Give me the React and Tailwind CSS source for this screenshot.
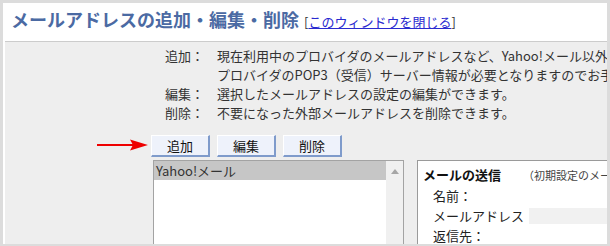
export default function App() {
  return (
    <div className="relative w-[610px] h-[246px] overflow-hidden bg-[#dcdcdc] pt-[3px] px-[3px] pb-[2px] font-['Noto_Sans_CJK_JP','Noto_Sans',sans-serif]">
      <div className="bg-white h-full flex flex-col overflow-hidden">
        <div className="h-[38px] shrink-0 flex items-baseline pl-[8px] pt-[4px] whitespace-nowrap">
          <span className="text-[18px] leading-[24px] font-bold text-[#4b6aa3]">メールアドレスの追加・編集・削除</span>
          <span className="ml-[5px] text-[13px] text-[#333]">
            [<span className="text-[#2a2ad0] underline">このウィンドウを閉じる</span>]
          </span>
        </div>
        <div className="h-px shrink-0 ml-[2px] bg-[#cccccc]" />
        <div className="ml-[2px] flex-1 bg-[#eeeeee] pt-[4px] text-[13px] leading-[19px] text-[#333] overflow-hidden">
          <div className="ml-[160px] grid grid-cols-[52px_1fr] whitespace-nowrap">
            <div>追加：</div>
            <div>
              <div>現在利用中のプロバイダのメールアドレスなど、Yahoo!メール以外のメールアドレスを追加できます。</div>
              <div>プロバイダのPOP3（受信）サーバー情報が必要となりますのでお手元にご用意ください。</div>
            </div>
            <div>編集：</div>
            <div>選択したメールアドレスの設定の編集ができます。</div>
            <div>削除：</div>
            <div>不要になった外部メールアドレスを削除できます。</div>
          </div>
          <div className="mt-[13px] ml-[146px] flex gap-[7px]">
            {["追加", "編集", "削除"].map((t) => (
              <button
                key={t}
                className="w-[59px] h-[22px] bg-[#eef2fb] border-t border-l border-t-white border-l-white border-r-2 border-b-2 border-r-[#7f9bcb] border-b-[#7f9bcb] text-[13px] leading-[19px] text-[#111] flex items-center justify-center"
              >
                {t}
              </button>
            ))}
          </div>
          <div className="mt-[3px] ml-[148px] flex items-start">
            <div className="w-[251px] h-[90px] shrink-0 border border-[#a3a3a3] bg-white flex">
              <div className="flex-1">
                <div className="h-[19px] bg-[#c6c6c6] pl-[2px] leading-[19px] text-[#333]">Yahoo!メール</div>
              </div>
              <div className="w-[17px] bg-[#f0f0f0] flex justify-center pt-[8px]">
                <svg width="8" height="5" viewBox="0 0 8 5">
                  <polygon points="0,5 8,5 4,0" fill="#a6a6a6" />
                </svg>
              </div>
            </div>
            <div className="ml-[13px] w-[300px] h-[90px] shrink-0 border border-[#9a9a9a] bg-white pt-[4px] leading-[20px] text-[#222] whitespace-nowrap">
              <div className="pl-[5px] flex items-baseline">
                <span className="font-bold text-[13px] text-[#111]">メールの送信</span>
                <span className="ml-[22px] text-[11px] text-[#444]">（初期設定のメールアドレス）</span>
              </div>
              <div className="pl-[15px] mt-[1px]">名前：</div>
              <div className="pl-[15px] flex items-center">
                <span>メールアドレス</span>
                <span className="ml-[5px] w-[110px] h-[16px] bg-[#f1f1f1]" />
              </div>
              <div className="pl-[15px]">返信先：</div>
            </div>
          </div>
        </div>
      </div>
      <svg className="absolute left-[97px] top-[139px]" width="52" height="12" viewBox="0 0 52 12">
        <line x1="0" y1="6" x2="36" y2="6" stroke="#ee0000" strokeWidth="2" />
        <polygon points="33,0.5 51,6 33,11.5 36,6" fill="#ee0000" />
      </svg>
    </div>
  );
}
